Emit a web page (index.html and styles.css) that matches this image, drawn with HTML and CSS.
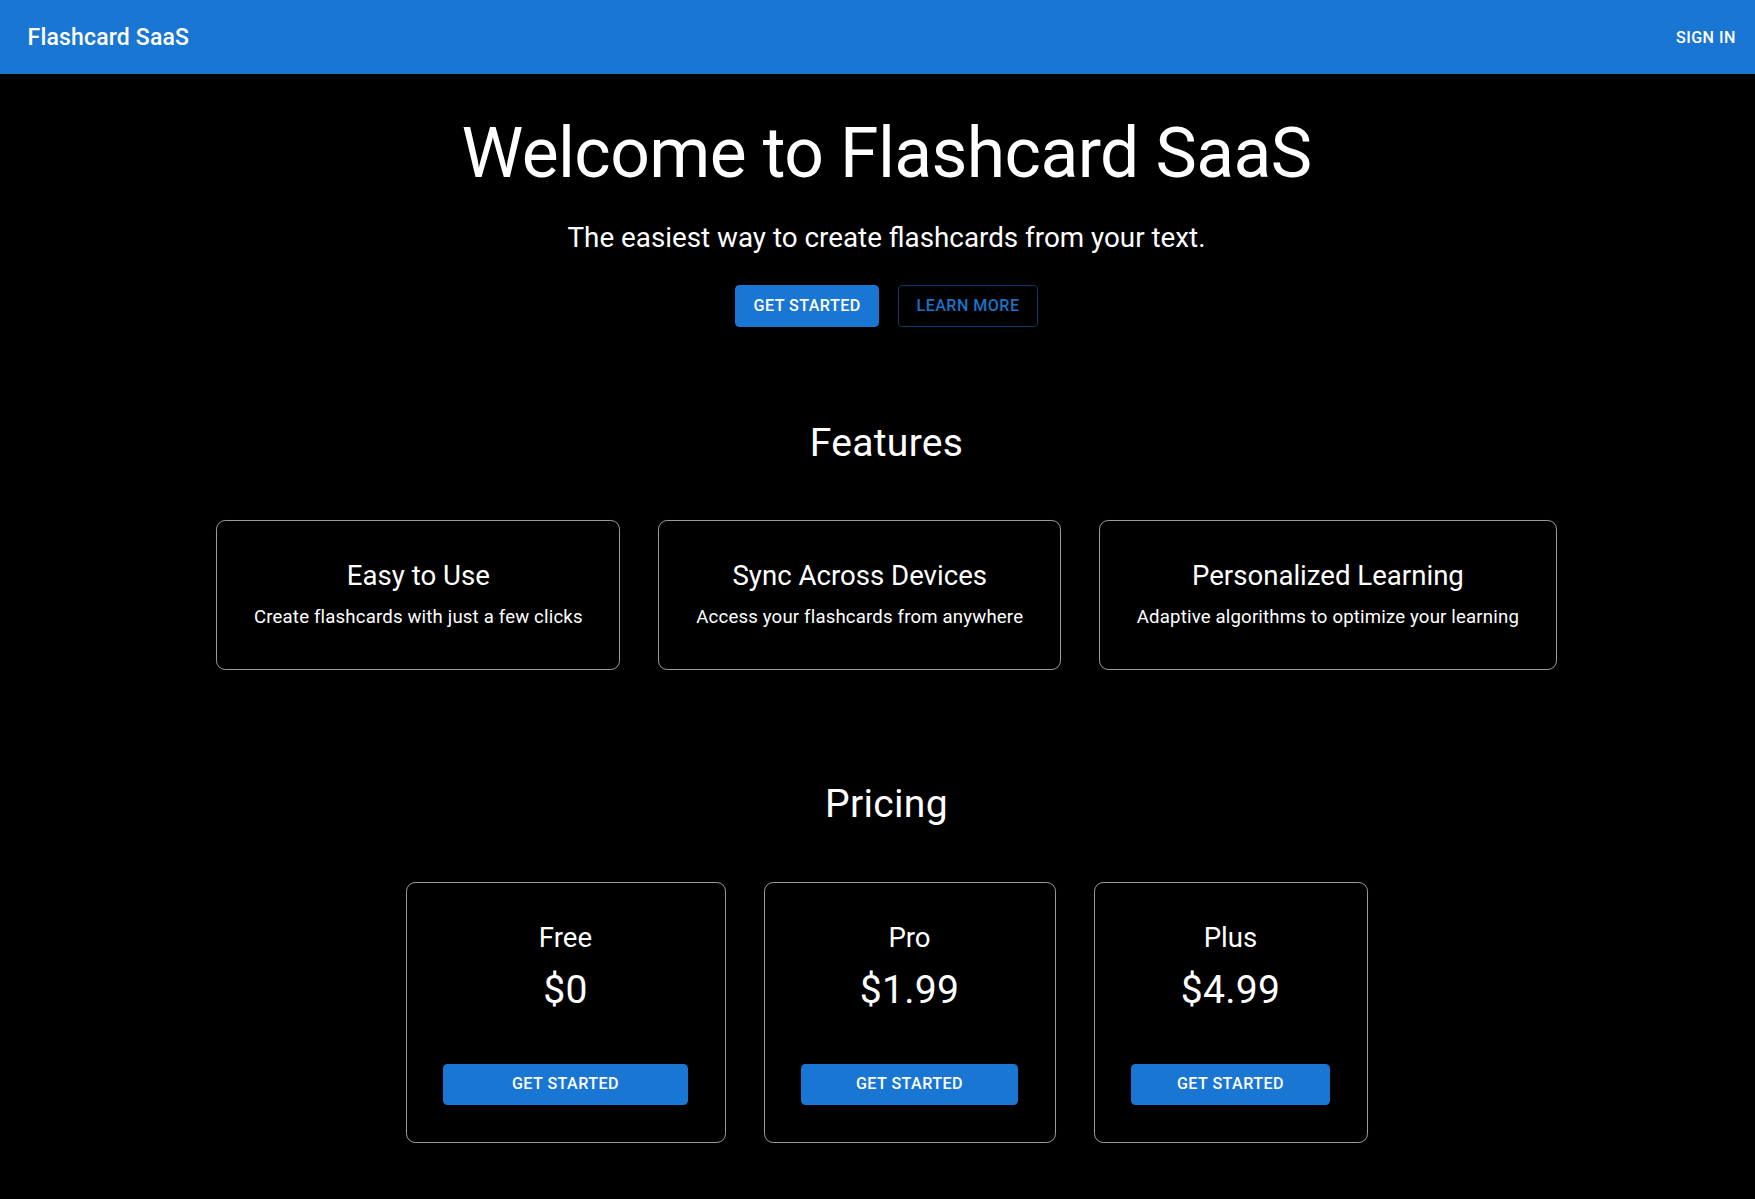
FILE: index.html
```html
<!DOCTYPE html>
<html lang="en">
<head>
<meta charset="utf-8">
<title>Flashcard SaaS</title>
<link rel="stylesheet" href="styles.css">
</head>
<body>
<header class="appbar">
  <div class="brand">Flashcard SaaS</div>
  <button class="btn btn-text">Sign In</button>
</header>
<main class="main">
  <section class="hero">
    <h1 class="hero-title">Welcome to Flashcard SaaS</h1>
    <p class="hero-sub">The easiest way to create flashcards from your text.</p>
    <div class="hero-actions">
      <button class="btn btn-contained">Get Started</button>
      <button class="btn btn-outlined">Learn More</button>
    </div>
  </section>

  <section class="section features">
    <h2 class="section-title">Features</h2>
    <div class="card-row">
      <div class="card">
        <h3 class="card-title">Easy to Use</h3>
        <p class="card-text">Create flashcards with just a few clicks</p>
      </div>
      <div class="card">
        <h3 class="card-title">Sync Across Devices</h3>
        <p class="card-text">Access your flashcards from anywhere</p>
      </div>
      <div class="card">
        <h3 class="card-title">Personalized Learning</h3>
        <p class="card-text">Adaptive algorithms to optimize your learning</p>
      </div>
    </div>
  </section>

  <section class="section pricing">
    <h2 class="section-title">Pricing</h2>
    <div class="card-row">
      <div class="card plan plan-free">
        <h3 class="card-title">Free</h3>
        <div class="price">$0</div>
        <button class="btn btn-contained btn-block">Get Started</button>
      </div>
      <div class="card plan plan-pro">
        <h3 class="card-title">Pro</h3>
        <div class="price">$1.99</div>
        <button class="btn btn-contained btn-block">Get Started</button>
      </div>
      <div class="card plan plan-plus">
        <h3 class="card-title">Plus</h3>
        <div class="price">$4.99</div>
        <button class="btn btn-contained btn-block">Get Started</button>
      </div>
    </div>
  </section>
</main>
</body>
</html>
```

FILE: styles.css
```css
* { box-sizing: border-box; }

html, body {
  margin: 0;
  padding: 0;
  background: #000;
  color: #fff;
  font-family: Roboto, "Noto Sans", "Liberation Sans", sans-serif;
}

body { overflow-x: hidden; }

.appbar {
  height: 74px;
  background: #1976d2;
  display: flex;
  align-items: center;
  justify-content: space-between;
  padding: 3px 10px 0 27.6px;
  box-shadow: 0 2px 4px -1px rgba(0,0,0,0.2), 0 4px 5px 0 rgba(0,0,0,0.14);
}

.brand {
  font-size: 23px;
  font-weight: 500;
  line-height: 1.6;
  letter-spacing: 0.0075em;
}

.btn {
  font-family: inherit;
  font-size: 16.1px;
  font-weight: 500;
  line-height: 1.75;
  letter-spacing: 0.02857em;
  text-transform: uppercase;
  border-radius: 4.6px;
  border: 0;
  cursor: pointer;
  padding: 6.9px 18.4px;
  color: #fff;
  background: transparent;
}

.btn-text {
  padding: 6.9px 9.2px;
  color: #fff;
}

.btn-contained {
  background: #1976d2;
  color: #fff;
  box-shadow: 0 3px 1px -2px rgba(0,0,0,0.2), 0 2px 2px 0 rgba(0,0,0,0.14), 0 1px 5px 0 rgba(0,0,0,0.12);
}

.btn-outlined {
  border: 1px solid rgba(25,118,210,0.5);
  color: #1d72c6;
  padding: 5.9px 17.4px;
}

.btn-block {
  display: block;
  width: 100%;
}

.main {
  padding-left: 18px;
  text-align: center;
}

.hero {
  padding-top: 38px;
}

.hero-title {
  margin: 0 0 23px;
  font-size: 69.6px;
  font-weight: 400;
  line-height: 1.2;
  letter-spacing: -0.00833em;
}

.hero-sub {
  margin: 0 0 9.66px;
  font-size: 27.8px;
  font-weight: 400;
  line-height: 1.334;
}

.hero-actions {
  margin-top: 29.5px;
  display: flex;
  justify-content: center;
  gap: 19px;
}

.section {
  display: flex;
  flex-direction: column;
  align-items: center;
}

.features { margin-top: 91.5px; }
.pricing { margin-top: 110.3px; }

.section-title {
  margin: 0 0 13.7px;
  font-size: 39.1px;
  font-weight: 400;
  line-height: 1.235;
  letter-spacing: 0.00735em;
}

.card-row {
  margin-top: 39.7px;
  display: flex;
  justify-content: center;
  gap: 38px;
}

.card {
  border: 1px solid #9a9a9a;
  border-radius: 9.2px;
  padding: 36.8px;
}

.card-title {
  margin: 0 0 9.66px;
  font-size: 27.6px;
  font-weight: 400;
  line-height: 1.334;
}

.card-text {
  margin: 0;
  font-size: 18.6px;
  font-weight: 400;
  line-height: 1.5;
  letter-spacing: 0.00938em;
}

.price {
  margin: 0 0 13.7px;
  font-size: 39.1px;
  font-weight: 400;
  line-height: 1.235;
  letter-spacing: 0.00735em;
}

.plan .btn-block { margin-top: 49px; }

.plan-free { width: 320px; }
.plan-pro { width: 292px; }
.plan-plus { width: 274px; }
```
